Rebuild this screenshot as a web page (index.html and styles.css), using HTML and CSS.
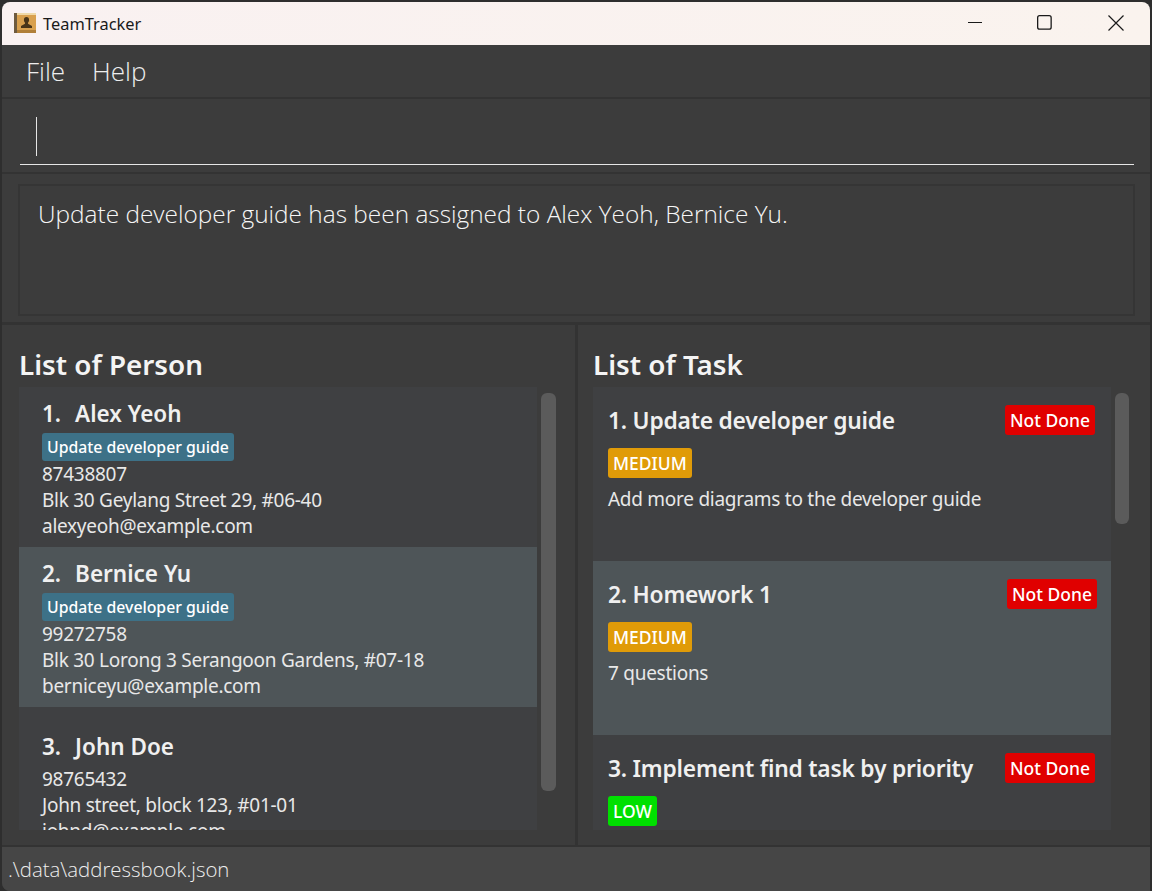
FILE: index.html
```html
<!DOCTYPE html>
<html lang="en">
<head>
    <meta charset="UTF-8">
    <title>TeamTracker</title>
    <link rel="stylesheet" href="styles.css">
</head>
<body>
    <div class="window">
        <div class="titlebar">
            <svg class="app-icon" width="22" height="22" viewBox="0 0 22 22">
                <rect x="0" y="1" width="22" height="20" fill="#d9a04e"/>
                <rect x="0" y="1" width="3" height="20" fill="#6e5a3e"/>
                <rect x="3" y="1" width="19" height="2" fill="#f0d9a8"/>
                <rect x="3" y="18" width="19" height="3" fill="#b07f38"/>
                <path d="M12.5 5c-1.8 0-2.6 1.300-2.600 2.900 0 1.200.5 2.100 1.100 2.700v1.200L7 14v2h11v-2l-4-2.200v-1.200c.6-.6 1.100-1.500 1.100-2.700C15.100 6.300 14.300 5 12.500 5z" fill="#4a3518"/>
            </svg>
            <span class="app-name">TeamTracker</span>
            <div class="win-controls">
                <svg width="16" height="16" viewBox="0 0 16 16"><path d="M2 7.500h14" stroke="#1a1a1a" stroke-width="1" fill="none"/></svg>
                <svg width="16" height="16" viewBox="0 0 16 16"><rect x=".65" y=".65" width="13.500" height="13.500" rx="2" stroke="#1a1a1a" stroke-width="1.300" fill="none"/></svg>
                <svg width="16" height="16" viewBox="0 0 16 16"><path d="M.5.500l15 15M15.500.500l-15 15" stroke="#1a1a1a" stroke-width="1.200" fill="none"/></svg>
            </div>
        </div>

        <div class="menubar">
            <span>File</span>
            <span>Help</span>
        </div>

        <div class="command-bar">
            <div class="command-input"><span class="caret"></span></div>
        </div>

        <div class="result-bar">
            <div class="result-box">Update developer guide has been assigned to Alex Yeoh, Bernice Yu.</div>
        </div>

        <div class="lists">
            <section class="panel panel-person">
                <h2>List of Person</h2>
                <div class="list-wrap">
                    <div class="list">
                        <div class="person-row">
                            <div class="person-name"><span class="num">1.</span>Alex Yeoh</div>
                            <div class="tags"><span class="tag">Update developer guide</span></div>
                            <div class="line">87438807</div>
                            <div class="line">Blk 30 Geylang Street 29, #06-40</div>
                            <div class="line">alexyeoh@example.com</div>
                        </div>
                        <div class="person-row selected">
                            <div class="person-name"><span class="num">2.</span>Bernice Yu</div>
                            <div class="tags"><span class="tag">Update developer guide</span></div>
                            <div class="line">99272758</div>
                            <div class="line">Blk 30 Lorong 3 Serangoon Gardens, #07-18</div>
                            <div class="line">berniceyu@example.com</div>
                        </div>
                        <div class="person-row no-tags">
                            <div class="person-name"><span class="num">3.</span>John Doe</div>
                            <div class="line">98765432</div>
                            <div class="line">John street, block 123, #01-01</div>
                            <div class="line">johnd@example.com</div>
                        </div>
                    </div>
                    <div class="scroll-track"><div class="thumb thumb-person"></div></div>
                </div>
            </section>

            <section class="panel panel-task">
                <h2>List of Task</h2>
                <div class="list-wrap">
                    <div class="list">
                        <div class="task-row">
                            <div class="task-head">
                                <span class="task-name">1. Update developer guide</span>
                                <span class="status">Not Done</span>
                            </div>
                            <span class="priority medium">MEDIUM</span>
                            <div class="line task-desc">Add more diagrams to the developer guide</div>
                        </div>
                        <div class="task-row selected">
                            <div class="task-head">
                                <span class="task-name">2. Homework 1</span>
                                <span class="status">Not Done</span>
                            </div>
                            <span class="priority medium">MEDIUM</span>
                            <div class="line task-desc">7 questions</div>
                        </div>
                        <div class="task-row">
                            <div class="task-head">
                                <span class="task-name">3. Implement find task by priority</span>
                                <span class="status">Not Done</span>
                            </div>
                            <span class="priority low">LOW</span>
                        </div>
                    </div>
                    <div class="scroll-track"><div class="thumb thumb-task"></div></div>
                </div>
            </section>
        </div>

        <div class="statusbar">.\data\addressbook.json</div>
    </div>
</body>
</html>
```

FILE: styles.css
```css
html, body { height: 100%; }
body {
    margin: 0;
    background: #2e2e2e;
    font-family: "Noto Sans", "Open Sans", sans-serif;
    color: #fff;
    overflow: hidden;
}
.window {
    box-sizing: border-box;
    width: 1148px;
    height: 889px;
    margin: 2px 2px 0 2px;
    border-radius: 8px 8px 0 8px;
    background: #3c3c3c;
    overflow: hidden;
    display: flex;
    flex-direction: column;
}

/* title bar */
.titlebar {
    height: 43px;
    flex: none;
    display: flex;
    align-items: center;
    padding-left: 12px;
    background: linear-gradient(90deg, #f9f1f1, #faf3ee);
    color: #1a1a1a;
}
.app-icon { flex: none; margin-top: -2px; }
.app-name { margin-left: 7px; font-size: 16.400px; }
.win-controls {
    margin-left: auto;
    margin-right: 26px;
    margin-top: -2px;
    display: flex;
    align-items: center;
    gap: 55px;
}

/* menu */
.menubar {
    height: 52px;
    flex: none;
    display: flex;
    align-items: center;
    gap: 27px;
    padding-left: 24px;
    border-bottom: 2px solid #333;
    font-family: "Open Sans", sans-serif;
    font-weight: 300;
    font-size: 26px;
    color: #eee;
}

/* command box */
.command-bar {
    height: 75px;
    flex: none;
    box-sizing: border-box;
    padding: 14px 16px 0 18px;
    border-bottom: 2px solid #333;
}
.command-input {
    height: 52px;
    box-sizing: border-box;
    padding: 4px 0 0 16px;
    border-bottom: 1.500px solid #e6e6e6;
}
.caret { display: block; width: 1px; height: 39px; background: #e6e6e6; }

/* result box */
.result-bar {
    height: 151px;
    flex: none;
    box-sizing: border-box;
    padding: 10px 15px 6px 16px;
    border-bottom: 3px solid #333;
}
.result-box {
    height: 100%;
    box-sizing: border-box;
    padding: 11px 18px;
    border: 2px solid #353535;
    font-family: "Open Sans", sans-serif;
    font-weight: 300;
    font-size: 24.400px;
    color: #f6f6f6;
}

/* lists */
.lists { flex: 1; display: flex; min-height: 0; }
.panel { box-sizing: border-box; padding-top: 19px; display: flex; flex-direction: column; min-height: 0; }
.panel-person { width: 576px; border-right: 3px solid #333; padding-left: 17px; }
.panel-task { flex: 1; padding-left: 15px; }
.panel h2 {
    margin: 0 0 3px 0;
    height: 40px;
    line-height: 40px;
    font-size: 27.800px;
    font-weight: 600;
    color: #f4f4f4;
}
.list-wrap { display: flex; height: 443px; flex: none; }
.list { width: 518px; flex: none; overflow: hidden; background: #3f4042; }
.scroll-track { width: 15px; flex: none; margin-left: 4px; padding-top: 6px; }
.thumb { background: #5b5b5b; border-radius: 6px; }
.thumb-person { height: 398px; }
.thumb-task { height: 131px; width: 14px; }
.selected { background: #4e5558; }

.line { font-size: 19px; line-height: 26px; color: #e8e8e8; letter-spacing: -0.27px; }

.person-row { box-sizing: border-box; height: 160px; padding: 11px 23px 0; }
.person-row.no-tags { padding-top: 24px; height: auto; }
.person-row.no-tags .person-name { margin-bottom: 3px; }
.person-name { font-size: 22.500px; line-height: 32px; font-weight: 600; color: #f0f0f0; display: flex; }
.num { margin-right: 14px; }
.tags { margin: 3px 0 0; display: flex; }
.tag {
    background: #3d7187;
    border-radius: 3px;
    padding: 0 5px;
    height: 28px;
    line-height: 28px;
    font-size: 15.800px;
    font-weight: 500;
    color: #fff;
}

.task-row { box-sizing: border-box; height: 174px; padding: 18px 16px 0 15px; }
.task-row.selected { padding-right: 14px; }
.task-head { display: flex; justify-content: space-between; align-items: center; height: 30px; }
.task-name { font-size: 22.800px; font-weight: 600; letter-spacing: -0.22px; color: #f0f0f0; }
.status {
    background: #e00000;
    border-radius: 3px;
    padding: 0 5px;
    height: 30px;
    line-height: 31px;
    font-size: 17.500px;
    font-weight: 500;
    color: #fff;
}
.priority {
    display: inline-block;
    margin-top: 13px;
    border-radius: 3px;
    padding: 0 5px;
    height: 30px;
    line-height: 30px;
    font-size: 17.500px;
    font-weight: 500;
    color: #fff;
}
.medium { background: #e09b08; }
.low { background: #00e000; }
.task-desc { margin-top: 8px; }

/* status bar */
.statusbar {
    height: 46px;
    flex: none;
    box-sizing: border-box;
    padding-left: 6px;
    border-top: 2px solid #333;
    background: #464646;
    line-height: 44px;
    font-family: "Open Sans", sans-serif;
    font-weight: 300;
    font-size: 20.400px;
    color: #eee;
}
```
